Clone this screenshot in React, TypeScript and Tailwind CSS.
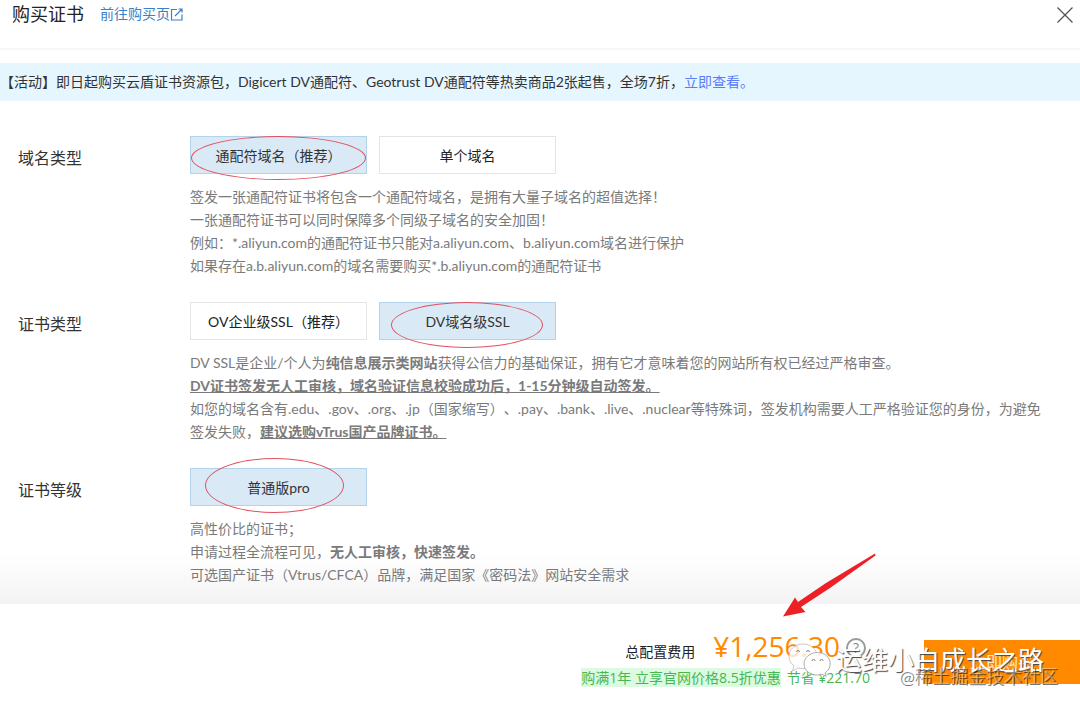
import { useState } from "react"
import type { ReactNode } from "react"

interface OptionProps {
    name: string;
    active: boolean;
    onClick: () => void;
    mark?: string;
}

function Option({ name, active, onClick, mark }: OptionProps) {
    return (
        <button
            type="button"
            onClick={onClick}
            aria-pressed={active}
            className={`relative h-[38px] w-[177px] border pt-0.5 text-sm ${active ? "border-[#b3d3ea] bg-[#dae9f6] text-[#333]" : "border-[#e3e4e6] bg-white text-[#222]"}`}
        >
            {name}
            {mark && <span className={`pointer-events-none absolute rounded-[50%] border border-[#e0515f] ${mark}`} />}
        </button>
    )
}

function FormRow({ label, children }: { label: string; children: ReactNode }) {
    return (
        <section className="flex pl-[18px]">
            <h2 className="w-[172px] shrink-0 pt-[10px] text-[16px] leading-6 text-[#333]">{label}</h2>
            <div className="min-w-0 flex-1 pr-8">{children}</div>
        </section>
    )
}

function Description({ children }: { children: ReactNode }) {
    return <div className="mt-[11px] text-sm leading-[23px] text-[#7a7a7a]">{children}</div>
}

function LinkIcon() {
    return (
        <svg className="h-[13px] w-[13px]" viewBox="0 0 13 13" fill="none" stroke="currentColor" strokeWidth="1.2">
            <path d="M7 1.5H1.5v10.500h10.500V6.500M8.500 1h3.500v3.500M12 1 5 8" />
        </svg>
    )
}

function WechatIcon() {
    return (
        <svg className="h-[34px] w-[44px]" viewBox="0 0 44 34" fill="#fff" stroke="#999" strokeWidth="0.8">
            <path d="M15 1C7 1 1 6.500 1 13.500c0 4 2 7 5 9.300L4.500 28l5.500-3c1.600.4 3.300.6 5 .6 8 0 14-5.300 14-12.100S23 1 15 1z" fillOpacity="0.75" stroke="#bbb" />
            <path d="M29.500 9.500C22 9.500 16 14.500 16 21s6 11 13.500 11c1.600 0 3.200-.2 4.700-.7l4 2-1-3.600c3-2 5-5 5-8.700 0-6.500-5.200-11.500-12.700-11.500z" fillOpacity="0.9" />
            <g fill="none" stroke="#888" strokeWidth="1">
                <path d="M8.500 9a1.500 1.500 0 0 1 3 0M18.500 9a1.500 1.500 0 0 1 3 0M24 18a1.500 1.500 0 0 1 3 0M32 18a1.500 1.500 0 0 1 3 0" />
            </g>
        </svg>
    )
}

export default function App() {
    const [domain, setDomain] = useState("wildcard")
    const [type, setType] = useState("dv")

    return (
        <main className="bg-white font-['Lato','Noto_Sans_CJK_SC',sans-serif] [text-spacing-trim:space-all]">
            <header className="flex h-[50px] items-start justify-between border-b-2 border-[#f6f6f6] pr-[7px] pl-3">
                <div className="flex items-center">
                    <h1 className="text-[18px] leading-7 text-[#222]">购买证书</h1>
                    <a href="#" className="ml-4 flex items-center text-sm text-[#3a7fc8]">
                        前往购买页
                        <LinkIcon />
                    </a>
                </div>
                <button type="button" aria-label="关闭" className="mt-[7px] text-[#555]">
                    <svg className="h-4 w-4" viewBox="0 0 16 16" stroke="currentColor" strokeWidth="1.3">
                        <path d="M.5.5l15 15M15.500.5l-15 15" />
                    </svg>
                </button>
            </header>

            <p className="mt-[13px] bg-[#e6f6fe] text-sm leading-[38px] text-[#333]">
                【活动】即日起购买云盾证书资源包，Digicert DV通配符、Geotrust DV通配符等热卖商品2张起售，全场7折，
                <a href="#" className="text-[#5c7cfa]">立即查看。</a>
            </p>

            <div className="flex flex-col gap-[25px] bg-linear-to-b from-white from-90% to-[#f3f3f3] pt-[35px] pb-[18px]">
                <FormRow label="域名类型">
                    <div className="flex gap-3">
                        <Option name="通配符域名（推荐）" active={domain === "wildcard"} onClick={() => setDomain("wildcard")} mark="-top-px left-0 h-[44px] w-[175px]" />
                        <Option name="单个域名" active={domain === "single"} onClick={() => setDomain("single")} />
                    </div>
                    <Description>
                        <p>签发一张通配符证书将包含一个通配符域名，是拥有大量子域名的超值选择！</p>
                        <p>一张通配符证书可以同时保障多个同级子域名的安全加固！</p>
                        <p>例如：*.aliyun.com的通配符证书只能对a.aliyun.com、b.aliyun.com域名进行保护</p>
                        <p>如果存在a.b.aliyun.com的域名需要购买*.b.aliyun.com的通配符证书</p>
                    </Description>
                </FormRow>

                <FormRow label="证书类型">
                    <div className="flex gap-3">
                        <Option name="OV企业级SSL（推荐）" active={type === "ov"} onClick={() => setType("ov")} />
                        <Option name="DV域名级SSL" active={type === "dv"} onClick={() => setType("dv")} mark="-top-px left-[11px] h-[46px] w-[152px]" />
                    </div>
                    <Description>
                        <p>DV SSL是企业/个人为<b>纯信息展示类网站</b>获得公信力的基础保证，拥有它才意味着您的网站所有权已经过严格审查。</p>
                        <p><b className="underline">DV证书签发无人工审核，域名验证信息校验成功后，1-15分钟级自动签发。</b></p>
                        <p>
                            如您的域名含有.edu、.gov、.org、.jp（国家缩写）、.pay、.bank、.live、.nuclear等特殊词，签发机构需要人工严格验证您的身份，为避免签发失败，<b className="underline">建议选购vTrus国产品牌证书。</b>
                        </p>
                    </Description>
                </FormRow>

                <FormRow label="证书等级">
                    <Option name="普通版pro" active onClick={() => {}} mark="-top-[11px] left-[14px] h-[55px] w-[139px]" />
                    <Description>
                        <p>高性价比的证书；</p>
                        <p>申请过程全流程可见，<b>无人工审核，快速签发。</b></p>
                        <p>可选国产证书（Vtrus/CFCA）品牌，满足国家《密码法》网站安全需求</p>
                    </Description>
                </FormRow>
            </div>

            <footer className="relative flex items-start justify-end pt-9 pb-6">
                {/* red arrow pointing at the price */}
                <svg className="pointer-events-none absolute -top-[52px] right-[203px] h-[66px] w-[96px]" viewBox="0 0 96 66" fill="#ee2027">
                    <path d="M94 1.500 94.500 3.500 49 36 20 55l4.500 5L2 64.500 14 45.500l3 4.500L45 31z" />
                </svg>

                <div className="mr-[54px] font-['Open_Sans','Noto_Sans_CJK_SC',sans-serif] text-sm">
                    <div className="mr-1 -mt-3 flex h-10 items-baseline justify-end">
                        <span className="mr-[18px] text-[#222]">总配置费用</span>
                        <span className="text-[28px] leading-9 text-[#ff8a00]">¥1,256.30</span>
                        <button type="button" aria-label="费用说明" className="ml-1.5 h-5 w-5 self-center rounded-full border-2 border-[#999] text-sm leading-4 text-[#888]">?</button>
                    </div>
                    <p className="text-[#45b854]">
                        <span className="bg-[#dcfadf]">购满1年 立享官网价格8.5折优惠</span>
                        <span className="ml-1.5">节省 ¥221.70</span>
                    </p>
                </div>
                <button type="button" className="h-[44px] w-[156px] bg-[#ff8a00] text-base text-white/80">立即购买</button>

                <div className="pointer-events-none absolute top-[38px] right-9 flex items-center gap-1">
                    <WechatIcon />
                    <span className="text-[26px] leading-9 text-white [text-shadow:1px_1px_1px_#444]">运维小白成长之路</span>
                </div>
                <span className="pointer-events-none absolute top-[60px] right-[22px] text-[18px] leading-6 text-white/40 [text-shadow:1px_1px_0_#0008]">@稀土掘金技术社区</span>
            </footer>
        </main>
    )
}
